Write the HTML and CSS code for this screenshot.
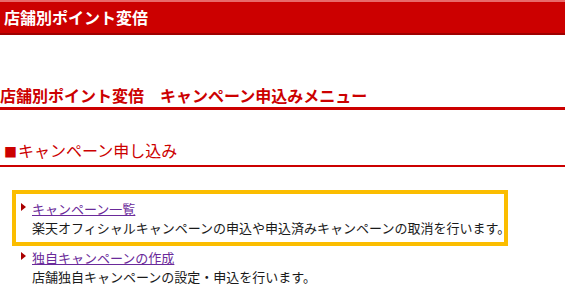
FILE: index.html
```html
<!DOCTYPE html>
<html lang="ja">
<head>
    <meta charset="UTF-8">
    <title>店舗別ポイント変倍</title>
    <link rel="stylesheet" href="styles.css">
</head>
<body>
    <div class="topbar">店舗別ポイント変倍</div>

    <h2 class="pagetitle">店舗別ポイント変倍　キャンペーン申込みメニュー</h2>

    <h3 class="section"><span class="sq">■</span>キャンペーン申し込み</h3>

    <div class="menu">
        <div class="item focus">
            <div class="linkrow"><span class="arrow"></span><a href="#">キャンペーン一覧</a></div>
            <p class="desc">楽天オフィシャルキャンペーンの申込や申込済みキャンペーンの取消を行います。</p>
        </div>
        <div class="item">
            <div class="linkrow"><span class="arrow"></span><a href="#">独自キャンペーンの作成</a></div>
            <p class="desc">店舗独自キャンペーンの設定・申込を行います。</p>
        </div>
    </div>

    <div class="ticks">
        <span></span><span></span><span></span><span></span><span></span>
    </div>
</body>
</html>
```

FILE: styles.css
```css
*{
    margin: 0;
    padding: 0;
    box-sizing: border-box;
}
body{
    font-family: "Noto Sans CJK JP", "Noto Sans", sans-serif;
    font-size: 13px;
    color: #222;
    background: #fff;
    width: 565px;
}
.topbar{
    height: 35px;
    background-color: #cc0000;
    border-top: 2px solid #e86a6a;
    border-bottom: 2px solid #9e0000;
    color: #fff;
    font-weight: bold;
    font-size: 16px;
    line-height: 30px;
    padding-left: 4px;
}
.pagetitle{
    margin-top: 50px;
    font-size: 16px;
    font-weight: bold;
    line-height: 20px;
    color: #cc0000;
    padding-bottom: 2px;
    border-bottom: 3px solid #cc0000;
}
.section{
    margin-top: 30px;
    font-size: 16px;
    font-weight: normal;
    line-height: 20px;
    color: #cc0000;
    padding-left: 4px;
    padding-bottom: 3px;
    border-bottom: 2px solid #cc0000;
}
.sq{
    font-size: 13px;
    margin-right: 1px;
}
.menu{
    margin-top: 27px;
}
.item{
    margin-left: 16px;
    width: 488px;
    padding: 5px 0 5px 16px;
}
.item + .item{
    padding-top: 6px;
}
.item.focus{
    outline: 4px solid #fbbd00;
}
.linkrow{
    display: flex;
    align-items: center;
    line-height: 19px;
    margin-left: -11px;
}
.arrow{
    width: 0;
    height: 0;
    border-top: 4px solid transparent;
    border-bottom: 4px solid transparent;
    border-left: 5px solid #aa0000;
    margin-right: 6px;
    margin-top: -3px;
}
.linkrow a{
    color: #6a2a9a;
    text-decoration: underline;
}
.desc{
    line-height: 19px;
    color: #1a1a1a;
    white-space: nowrap;
}
.ticks{
    margin-top: 14px;
    display: flex;
    height: 6px;
}
.ticks span{
    width: 70px;
    border-right: 1px solid #e2e2e2;
}
```
